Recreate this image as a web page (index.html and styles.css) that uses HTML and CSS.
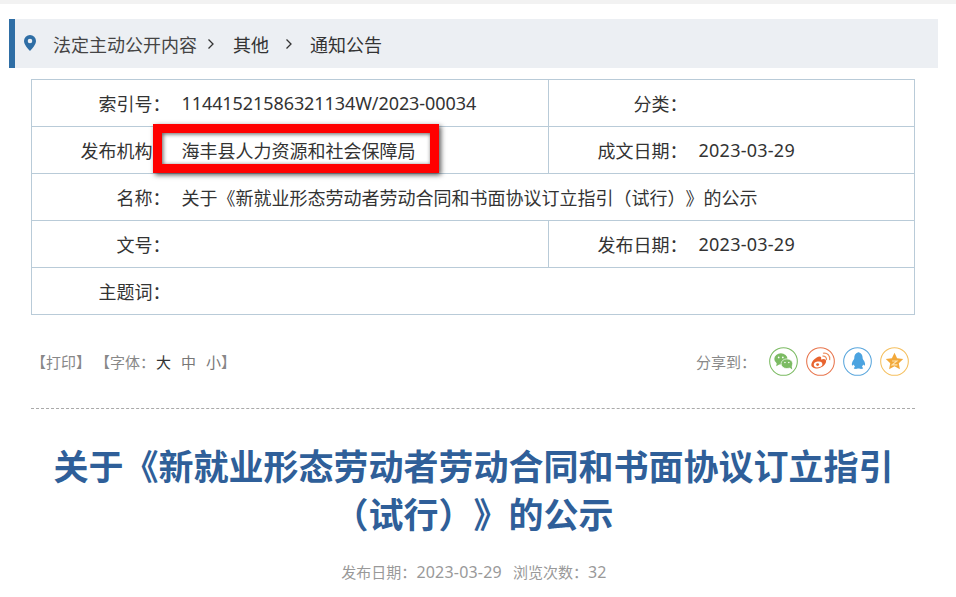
FILE: index.html
```html
<!DOCTYPE html>
<html lang="zh-CN">
<head>
<meta charset="utf-8">
<title>关于《新就业形态劳动者劳动合同和书面协议订立指引（试行）》的公示</title>
<link rel="stylesheet" href="styles.css">
</head>
<body>
<div class="topband"></div>
<nav class="crumb">
  <svg class="pin" width="12" height="16" viewBox="0 0 12 16"><path fill-rule="evenodd" fill="#2f6ea5" d="M6 0a6 6 0 0 1 6 6c0 3.600-3.800 7.600-6 10C3.800 13.600 0 9.600 0 6a6 6 0 0 1 6-6zm0 3.700a2.300 2.300 0 1 0 0 4.600 2.300 2.300 0 0 0 0-4.600z"/></svg>
  <span class="c1">法定主动公开内容</span>
  <svg class="chev" width="8" height="12" viewBox="0 0 8 12"><path d="M1.500 1.500 6 6l-4.500 4.500" fill="none" stroke="#333" stroke-width="1.300"/></svg>
  <span class="c2">其他</span>
  <svg class="chev chev2" width="8" height="12" viewBox="0 0 8 12"><path d="M1.500 1.500 6 6l-4.500 4.500" fill="none" stroke="#333" stroke-width="1.300"/></svg>
  <span class="c3">通知公告</span>
</nav>
<div class="info-wrap">
  <table class="info">
    <colgroup><col class="w-l"><col class="w-v"><col class="w-l"><col></colgroup>
    <tr><th>索引号：</th><td class="idno">11441521586321134W/2023-00034</td><th class="div">分类：</th><td></td></tr>
    <tr><th>发布机构：</th><td>海丰县人力资源和社会保障局</td><th class="div">成文日期：</th><td class="date">2023-03-29</td></tr>
    <tr><th>名称：</th><td colspan="3">关于《新就业形态劳动者劳动合同和书面协议订立指引（试行）》的公示</td></tr>
    <tr><th>文号：</th><td></td><th class="div">发布日期：</th><td class="date">2023-03-29</td></tr>
    <tr><th>主题词：</th><td colspan="3"></td></tr>
  </table>
  <div class="redbox"></div>
</div>
<div class="tools">
  <div class="left">【打印】 【字体：<span class="big">大</span><span class="mid">中</span><span class="sml">小</span>】</div>
  <div class="share">
    <span class="share-label">分享到：</span>
    <svg class="ico" width="29" height="29" viewBox="0 0 30 30"><circle cx="15" cy="15" r="14.300" fill="#fff" stroke="#7cbb63" stroke-width="1.100"/><ellipse cx="12.300" cy="12.300" rx="6.800" ry="5.800" fill="#7cbb63"/><path d="M8 16 7.500 20l4-2.500z" fill="#7cbb63"/><ellipse cx="18.500" cy="17.300" rx="6" ry="5" fill="#7cbb63" stroke="#fff" stroke-width=".7"/><path d="M21 21l3 2.200-.6-4z" fill="#7cbb63"/><circle cx="10" cy="10.800" r=".9" fill="#fff"/><circle cx="14.300" cy="10.800" r=".9" fill="#fff"/><circle cx="16.500" cy="16" r=".8" fill="#fff"/><circle cx="20.500" cy="16" r=".8" fill="#fff"/></svg>
    <svg class="ico" width="29" height="29" viewBox="0 0 30 30"><circle cx="15" cy="15" r="14.300" fill="#fff" stroke="#e8764e" stroke-width="1.100"/><path d="M5.500 18.500c0-3.700 4.800-8.500 8.500-8.800 1.700 0 2.100 1.300 1.500 3.200 3-1.200 5.300-.6 5.300 1.600 0 4-5.100 7.700-9.300 7.700-3.200 0-6-1.400-6-3.700z" fill="#e8642f"/><ellipse cx="12.500" cy="18" rx="4.500" ry="3" fill="#fff" transform="rotate(-10 12.500 18)"/><circle cx="12" cy="18.200" r="1.500" fill="#e8642f"/><path d="M17 9.500c2.500-.6 4.800 1.500 4.200 4M17.500 6.500c4.500-1 8 2.700 7 7" fill="none" stroke="#ef9160" stroke-width="1.200"/></svg>
    <svg class="ico" width="29" height="29" viewBox="0 0 30 30"><circle cx="15" cy="15" r="14.300" fill="#fff" stroke="#5ba7dd" stroke-width="1.100"/><path d="M15 5.500c3.500 0 5.300 2.800 5.300 5.800 0 1 .8 1.900 1.600 3.200 1 1.900 1.300 4.300.5 4.700-.5.200-1-.4-1.600-1-.2 1-.7 1.800-1.300 2.400 1 .4 1.500 1 1.300 1.500-.3.600-2.800.8-4.200.1h-1.200c-1.400.7-3.900.5-4.200-.1-.2-.5.300-1.100 1.300-1.500-.6-.6-1.100-1.400-1.300-2.400-.6.600-1.100 1.200-1.600 1-.8-.4-.5-2.800.5-4.700.8-1.300 1.600-2.200 1.600-3.200 0-3 1.800-5.800 5.300-5.800z" fill="#4ba3e0"/></svg>
    <svg class="ico" width="29" height="29" viewBox="0 0 30 30"><circle cx="15" cy="15" r="14.300" fill="#fff" stroke="#f5c060" stroke-width="1.100"/><path d="M15 6l2.700 5.700 6.300.8-4.600 4.300 1.200 6.200-5.600-3-5.600 3 1.200-6.200L6 12.500l6.300-.8z" fill="#f2a83a"/><path d="M12.500 14.500h5l-5 4h5.500" fill="none" stroke="#fde3b0" stroke-width="1.200"/></svg>
  </div>
</div>
<hr class="dash">
<h1 class="title">关于《新就业形态劳动者劳动合同和书面协议订立指引<br>（试行）》的公示</h1>
<p class="meta">发布日期：<span class="num">2023-03-29</span><span class="views">浏览次数：<span class="num">32</span></span></p>
</body>
</html>
```

FILE: styles.css
```css
html, body { margin: 0; padding: 0; background: #fff; }
body {
  width: 956px;
  height: 597px;
  overflow: hidden;
  font-family: "Noto Sans", "Noto Sans CJK SC", sans-serif;
  font-size: 18px;
  color: #333;
  text-spacing-trim: space-all;
}
.topband { height: 4px; background: #f2f2f2; }
.crumb {
  display: flex;
  align-items: center;
  box-sizing: border-box;
  height: 49px;
  margin: 15px 18px 0 9px;
  padding-left: 9px;
  background: #eceff3;
  border-left: 6px solid #2f6ea5;
  font-size: 18px;
  color: #444;
}
.pin { flex: none; margin-bottom: 2px; }
.c1 { margin-left: 17px; }
.chev { margin-left: 10px; flex: none; }
.c2 { margin-left: 18px; color: #333; }
.chev2 { margin-left: 16px; }
.c3 { margin-left: 17px; color: #333; }
.info-wrap { position: relative; margin: 11px 41px 0 31px; }
.info {
  width: 884px;
  height: 236px;
  border-collapse: collapse;
  table-layout: fixed;
}
.w-l { width: 140px; }
.w-v { width: 377px; }
.info th, .info td {
  border-top: 1px solid #b9cbd8;
  border-bottom: 1px solid #b9cbd8;
  font-weight: 400;
  height: 46px;
  padding: 0;
  color: #333;
  white-space: nowrap;
}
.info tr > :first-child { border-left: 1px solid #b9cbd8; }
.info tr > :last-child { border-right: 1px solid #b9cbd8; }
.info th { text-align: right; padding-right: 1px; }
.info td { padding-left: 10px; }
.info .div { border-left: 1px solid #b9cbd8; }
.info .idno { letter-spacing: -.08px; }
.info .date { letter-spacing: .25px; }
.redbox {
  position: absolute;
  left: 122px;
  top: 45px;
  width: 286px;
  height: 49px;
  box-sizing: border-box;
  border: 9px solid #f00;
  box-shadow: 2px 2px 5px rgba(0,0,0,.65), inset 1px 1px 4px rgba(0,0,0,.65);
}
.tools {
  display: flex;
  justify-content: space-between;
  align-items: center;
  height: 30px;
  margin: 31px 47px 0 31px;
  font-size: 15px;
  color: #888;
}
.left { white-space: pre; }
.big { color: #333; margin-left: 1px; }
.mid { margin-left: 10px; color: #777; }
.sml { margin-left: 10px; color: #777; }
.share { display: flex; align-items: center; }
.share-label { margin-right: 13px; margin-left: -1px; }
.ico { flex: none; }
.ico + .ico { margin-left: 8px; }
.dash {
  margin: 32px 41px 0 31px;
  border: 0;
  border-top: 1px dashed #aaa;
  height: 0;
}
.title {
  margin: 34px 40px 0 31px;
  font-size: 35px;
  line-height: 48px;
  font-weight: 700;
  color: #2f5f99;
  text-align: center;
}
.meta {
  margin: 22px 8px 0 0;
  text-align: center;
  font-size: 15px;
  color: #999;
}
.num { font-size: 16px; letter-spacing: .2px; }
.views { margin-left: 11px; }
```
